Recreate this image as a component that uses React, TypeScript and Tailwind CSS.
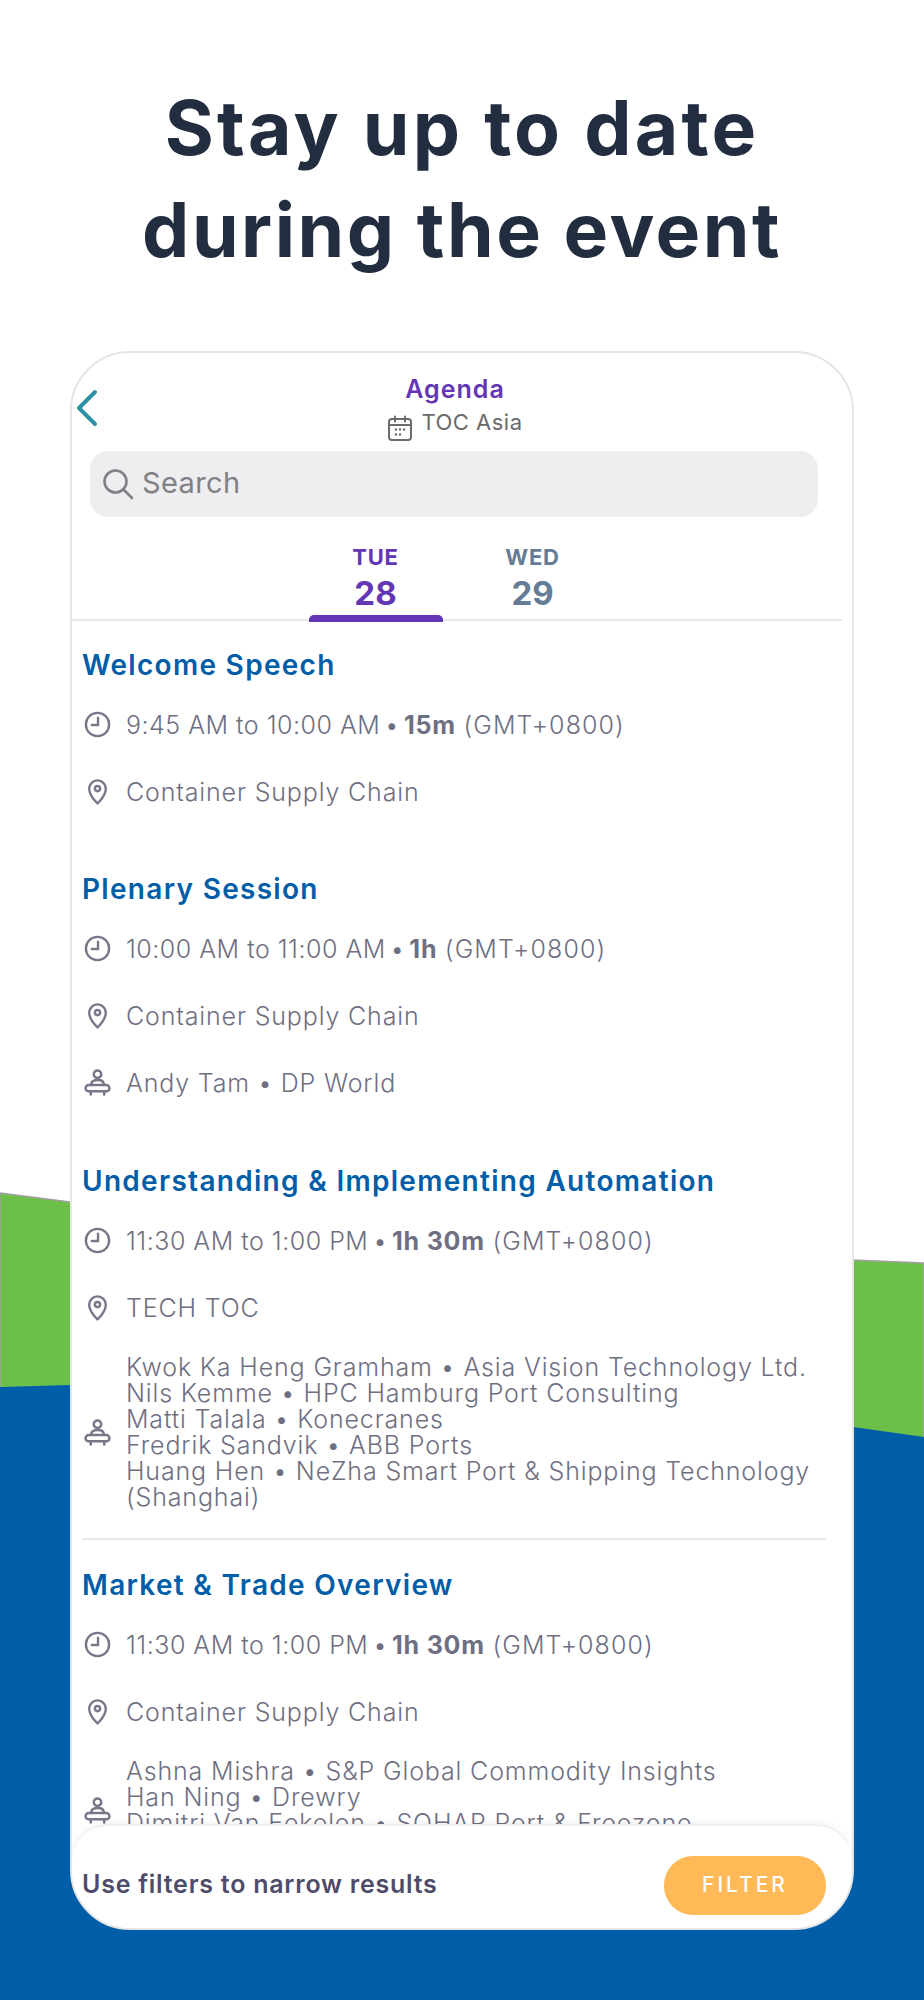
import React from 'react'

const font = "[font-family:Inter,'Liberation_Sans',sans-serif]"

function ClockIcon() {
    return (
        <svg viewBox="0 0 26 26" className="w-[27px] h-[27px]" fill="none" stroke="#77778a" strokeWidth="2.3" strokeLinecap="round">
            <circle cx="13" cy="13" r="11.2" />
            <path d="M13.5 6.5v7H7.5" />
        </svg>
    )
}

function PinIcon() {
    return (
        <svg viewBox="0 0 26 26" className="w-[27px] h-[27px]" fill="none" stroke="#77778a" strokeWidth="2.3" strokeLinejoin="round">
            <path d="M13 24.5C9.5 21 5 16.5 5 10.3a8 8 0 0 1 16 0C21 16.5 16.5 21 13 24.5z" />
            <circle cx="13" cy="10.2" r="2.5" />
        </svg>
    )
}

function SpeakerIcon() {
    return (
        <svg viewBox="0 0 26 26" className="w-[27px] h-[27px]" fill="none" stroke="#77778a" strokeWidth="2.4" strokeLinecap="round" strokeLinejoin="round">
            <circle cx="13" cy="5" r="3.6" />
            <path d="M7 15.5v-1c0-2.6 2.4-4 6-4s6 1.4 6 4v1" />
            <rect x="1.5" y="15.5" width="23" height="6" rx="3" />
            <path d="M6.5 21.5v3M19.5 21.5v3" />
        </svg>
    )
}

function CalendarIcon() {
    return (
        <svg viewBox="0 0 26 26" className="w-[26px] h-[26px] mt-[6px]" fill="none" stroke="#6b6b6b" strokeWidth="2" strokeLinecap="round">
            <rect x="2" y="4" width="22" height="21" rx="3" />
            <path d="M2 10h22M8 1.5v5M18 1.5v5" />
            <path d="M9 14.5h.01M13 14.5h.01M17 14.5h.01M9 19.5h.01M13 19.5h.01" strokeWidth="2.4" />
        </svg>
    )
}

type Row = { icon: 'clock' | 'pin' | 'speaker'; lines: React.ReactNode[] }

type Session = { title: string; rows: Row[]; spacing: string }

function time(range: string, length: string): React.ReactNode {
    return (
        <span className="tracking-[0.5px]">
            {range} <span className="mx-[-3px]">•</span> <span className="font-bold tracking-[0.8px]">{length}</span> <span className="tracking-[1.1px]">(GMT+0800)</span>
        </span>
    )
}

const sessions: Session[] = [
    {
        title: 'Welcome Speech',
        spacing: 'pb-[44px]',
        rows: [
            { icon: 'clock', lines: [time('9:45 AM to 10:00 AM', '15m')] },
            { icon: 'pin', lines: ['Container Supply Chain'] },
        ],
    },
    {
        title: 'Plenary Session',
        spacing: 'pb-[45px]',
        rows: [
            { icon: 'clock', lines: [time('10:00 AM to 11:00 AM', '1h')] },
            { icon: 'pin', lines: ['Container Supply Chain'] },
            { icon: 'speaker', lines: ['Andy Tam • DP World'] },
        ],
    },
    {
        title: 'Understanding & Implementing Automation',
        spacing: 'pb-[22px] border-b-2 border-[#e8e8ea]',
        rows: [
            { icon: 'clock', lines: [time('11:30 AM to 1:00 PM', '1h 30m')] },
            { icon: 'pin', lines: ['TECH TOC'] },
            {
                icon: 'speaker',
                lines: [
                    'Kwok Ka Heng Gramham • Asia Vision Technology Ltd.',
                    'Nils Kemme • HPC Hamburg Port Consulting',
                    'Matti Talala • Konecranes',
                    'Fredrik Sandvik • ABB Ports',
                    'Huang Hen • NeZha Smart Port & Shipping Technology',
                    '(Shanghai)',
                ],
            },
        ],
    },
    {
        title: 'Market & Trade Overview',
        spacing: 'pt-[25px] pb-[45px]',
        rows: [
            { icon: 'clock', lines: [time('11:30 AM to 1:00 PM', '1h 30m')] },
            { icon: 'pin', lines: ['Container Supply Chain'] },
            {
                icon: 'speaker',
                lines: [
                    'Ashna Mishra • S&P Global Commodity Insights',
                    'Han Ning • Drewry',
                    'Dimitri Van Eekelen • SOHAR Port & Freezone',
                    '\u00a0',
                ],
            },
        ],
    },
]

function SessionBlock({ session }: { session: Session }) {
    return (
        <div className={session.spacing}>
            <h2 className="h-10 flex items-center text-[28px] font-semibold tracking-[1.3px] text-[#005ea8] whitespace-nowrap">{session.title}</h2>
            <div className="mt-[6px]">
                {session.rows.map((row, i) => (
                    <div key={i} className={`min-h-[67px] py-[6px] flex items-center ${row.lines.length > 1 ? 'mt-[7px]' : ''}`}>
                        <div className="w-[44px] shrink-0 pl-[2px]">
                            {row.icon === 'clock' && <ClockIcon />}
                            {row.icon === 'pin' && <PinIcon />}
                            {row.icon === 'speaker' && <SpeakerIcon />}
                        </div>
                        <div className="text-[25px] leading-[26px] font-light tracking-[0.85px] text-[#6f6f82] whitespace-nowrap">
                            {row.lines.map((line, j) => (
                                <div key={j}>{line}</div>
                            ))}
                        </div>
                    </div>
                ))}
            </div>
        </div>
    )
}

export default function App() {
    return (
        <div className={`relative w-[924px] h-[2000px] overflow-hidden bg-white ${font}`}>
            {/* background waves */}
            <svg viewBox="0 0 924 2000" className="absolute inset-0 w-[924px] h-[2000px]">
                <path d="M0 1193L70 1202L853 1260L924 1263V2000H0Z" fill="#6cc04a" stroke="#a0a0a0" strokeWidth="1.5" />
                <path d="M0 1387L70 1385C400 1370 600 1380 853 1427L924 1437V2000H0Z" fill="#005ea8" />
            </svg>

            <div className="relative">
                <h1 className="pt-[77px] text-center text-[75px] leading-[102px] font-bold text-[#222d40]">
                    <span className="tracking-[3.2px]">Stay up to date</span>
                    <br />
                    <span className="tracking-[2.5px]">during the event</span>
                </h1>

                {/* phone card */}
                <div className="relative mt-[70px] mx-[70px] w-[784px] h-[1579px] overflow-hidden rounded-[60px] border-2 border-[#e5e5e7] bg-white">
                    {/* header */}
                    <div className="relative h-[98px]">
                        <svg viewBox="0 0 22 38" className="absolute left-[4px] top-[36px] w-[22px] h-[38px]" fill="none" stroke="#2f8fa5" strokeWidth="4" strokeLinecap="round" strokeLinejoin="round">
                            <path d="M19 3L3 19l16 16" />
                        </svg>
                        <div className="pt-[21px] text-center text-[25px] leading-[30px] tracking-[1px] font-semibold text-[#6236b4] pr-[14px]">Agenda</div>
                        <div className="mt-[5px] flex items-start justify-center gap-[8px] pr-[14px] text-[22px] leading-[26px] tracking-[0.5px] text-[#6b6b6b]">
                            <CalendarIcon />
                            <span>TOC Asia</span>
                        </div>
                    </div>

                    <div className="mx-[18px] h-[66px] w-[728px] flex items-center gap-[8px] pl-[12px] rounded-[18px] bg-[#eeeef0] text-[29px] tracking-[0.4px] text-[#808085]">
                        <svg viewBox="0 0 32 32" className="w-[32px] h-[32px]" fill="none" stroke="#808085" strokeWidth="2.6" strokeLinecap="round">
                            <circle cx="13.5" cy="13.5" r="11" />
                            <path d="M21.5 21.5L30 30" />
                        </svg>
                        <span className="pb-[2px]">Search</span>
                    </div>

                    {/* day tabs */}
                    <div className="mt-[24px] h-[80px] w-[770px] flex justify-center gap-[23px] border-b-2 border-[#e8e8ea] pr-[6px]">
                        <div className="relative w-[134px] h-[80px] pt-[2px] text-center text-[#6236b4] font-bold">
                            <div className="text-[22px] leading-[28px] tracking-[0.8px]">TUE</div>
                            <div className="mt-[3px] text-[33px] leading-[38px]">28</div>
                            <div className="absolute bottom-[-1px] left-0 right-0 h-[7px] rounded-t-[5px] bg-[#6236b4]" />
                        </div>
                        <div className="w-[134px] h-[80px] pt-[2px] text-center text-[#647c96] font-bold">
                            <div className="text-[22px] leading-[28px] tracking-[0.8px]">WED</div>
                            <div className="mt-[3px] text-[33px] leading-[38px]">29</div>
                        </div>
                    </div>

                    {/* session list */}
                    <div className="pt-[24px] pl-[10px] pr-[26px]">
                        {sessions.map((s) => (
                            <SessionBlock key={s.title} session={s} />
                        ))}
                    </div>

                    {/* filter bar, lies over the list */}
                    <div className="absolute left-0 right-0 bottom-0 h-[104px] flex items-center justify-between pl-[10px] pr-[26px] pt-[14px] rounded-t-[36px] border-t-2 border-[#efeff1] bg-white shadow-[0_-2px_6px_rgba(0,0,0,0.05)]">
                        <span className="pt-[2px] text-[25px] font-semibold tracking-[0.75px] text-[#4f4c6b]">Use filters to narrow results</span>
                        <div className="w-[162px] h-[59px] mb-[-2px] flex items-center justify-center rounded-[29px] bg-[#ffb957] text-[21px] font-medium tracking-[3px] text-white">FILTER</div>
                    </div>
                </div>
            </div>
        </div>
    )
}
